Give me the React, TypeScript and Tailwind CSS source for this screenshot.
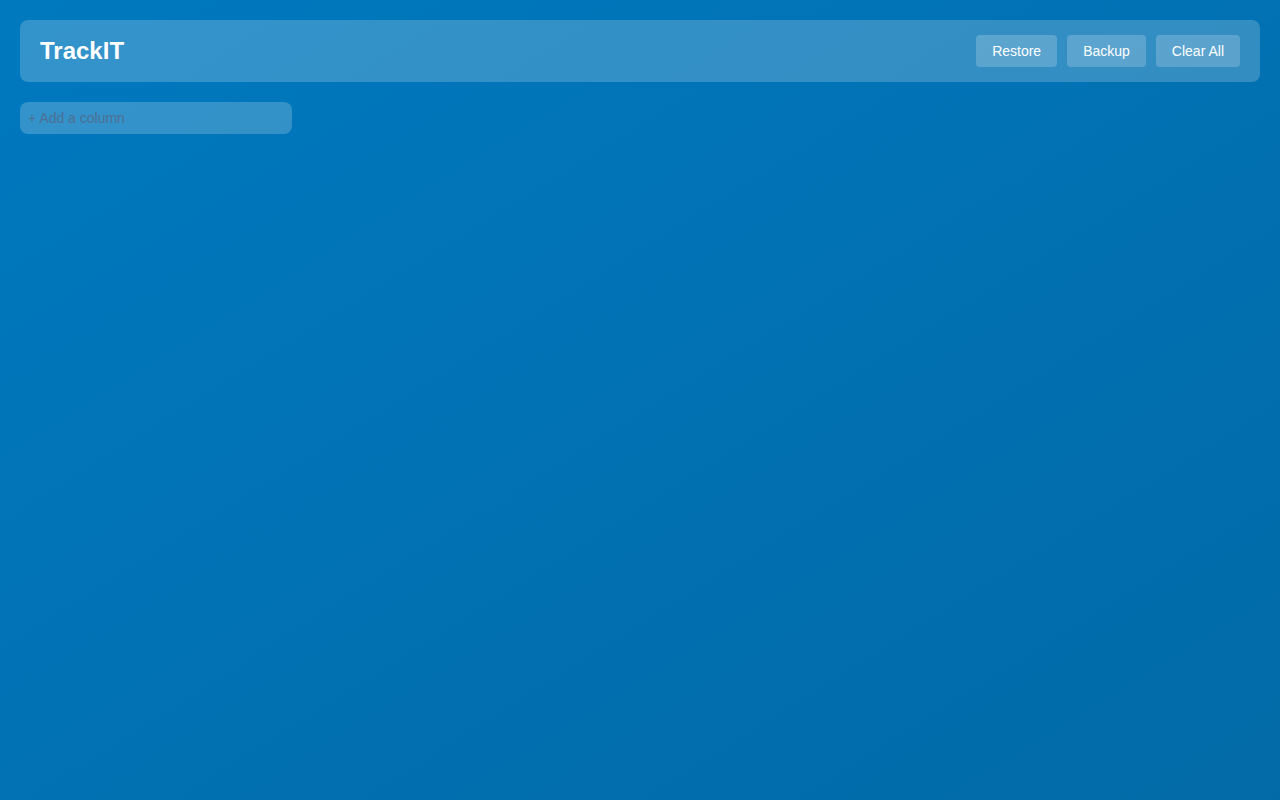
import React, { useState } from "react";

const App: React.FC = () => {
  const [column, setColumn] = useState("");

  return (
    <div className="min-h-screen w-full bg-gradient-to-br from-[#0079bf] to-[#026aa7] p-5 font-['Liberation_Sans',Arial,sans-serif]">
      {/* header */}
      <header className="flex items-center justify-between h-[62px] px-5 rounded-lg bg-white/20">
        <h1 className="text-2xl font-bold text-white">TrackIT</h1>
        <div className="flex items-center gap-2.5">
          <button className="h-8 px-4 rounded bg-white/20 text-white text-[14px]">
            Restore
          </button>
          <button className="h-8 px-4 rounded bg-white/20 text-white text-[14px]">
            Backup
          </button>
          <button className="h-8 px-4 rounded bg-white/20 text-white text-[14px]">
            Clear All
          </button>
        </div>
      </header>

      {/* board */}
      <div className="flex gap-4 mt-5">
        <input
          type="text"
          value={column}
          onChange={(e) => setColumn(e.target.value)}
          placeholder="+ Add a column"
          className="w-[272px] h-8 px-2 rounded-lg bg-white/20 text-[14px] text-white outline-none placeholder:text-[#4d6f93]"
        />
      </div>
    </div>
  );
};

export default App;
